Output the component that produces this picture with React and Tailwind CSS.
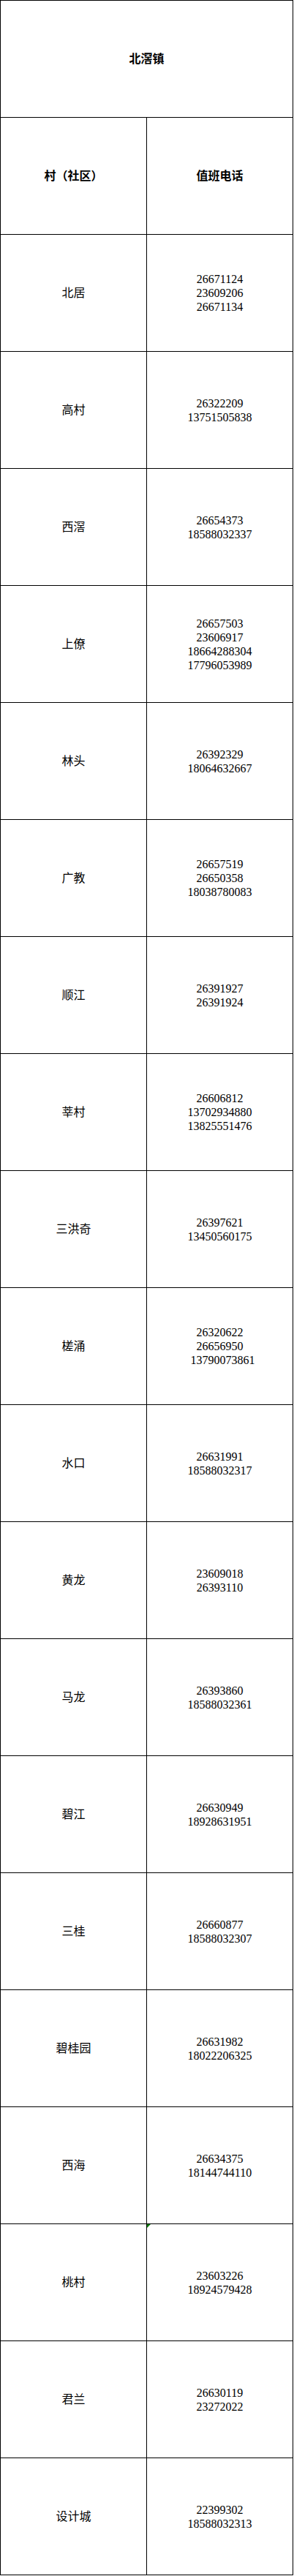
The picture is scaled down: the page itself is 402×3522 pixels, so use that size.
import React from 'react';

const rows = [
  { name: '北居', phones: ['26671124', '23609206', '26671134'] },
  { name: '高村', phones: ['26322209', '13751505838'] },
  { name: '西滘', phones: ['26654373', '18588032337'] },
  { name: '上僚', phones: ['26657503', '23606917', '18664288304', '17796053989'] },
  { name: '林头', phones: ['26392329', '18064632667'] },
  { name: '广教', phones: ['26657519', '26650358', '18038780083'] },
  { name: '顺江', phones: ['26391927', '26391924'] },
  { name: '莘村', phones: ['26606812', '13702934880', '13825551476'] },
  { name: '三洪奇', phones: ['26397621', '13450560175'] },
  { name: '槎涌', phones: ['26320622', '26656950', '\u00a0\u00a013790073861'] },
  { name: '水口', phones: ['26631991', '18588032317'] },
  { name: '黄龙', phones: ['23609018', '26393110'] },
  { name: '马龙', phones: ['26393860', '18588032361'] },
  { name: '碧江', phones: ['26630949', '18928631951'] },
  { name: '三桂', phones: ['26660877', '18588032307'] },
  { name: '碧桂园', phones: ['26631982', '18022206325'] },
  { name: '西海', phones: ['26634375', '18144744110'] },
  { name: '桃村', phones: ['23603226', '18924579428'], flag: true },
  { name: '君兰', phones: ['26630119', '23272022'] },
  { name: '设计城', phones: ['22399302', '18588032313'] },
];

const cell = 'h-[160px] border-r border-b border-black flex flex-col items-center justify-center text-center';

export default function App() {
  return (
    <div className="bg-white min-h-[3522px] text-black font-['Liberation_Serif','Noto_Sans_CJK_SC',serif] text-[16px] leading-[19px]">
      <div className="w-[401px] grid grid-cols-[200px_200px] border-l border-t border-black">
        <div className={`${cell} col-span-2 font-bold`}>北滘镇</div>
        <div className={`${cell} font-bold`}>村（社区）</div>
        <div className={`${cell} font-bold`}>值班电话</div>
        {rows.map(r => (
          <React.Fragment key={r.name}>
            <div className={cell}>{r.name}</div>
            <div className={`${cell} relative whitespace-pre`}>
              {r.flag && (
                <div className="absolute top-0 left-0 w-0 h-0 border-t-[5px] border-r-[5px] border-t-[#0a7a0a] border-r-transparent" />
              )}
              {r.phones.map(p => (
                <div key={p}>{p}</div>
              ))}
            </div>
          </React.Fragment>
        ))}
      </div>
    </div>
  );
}
